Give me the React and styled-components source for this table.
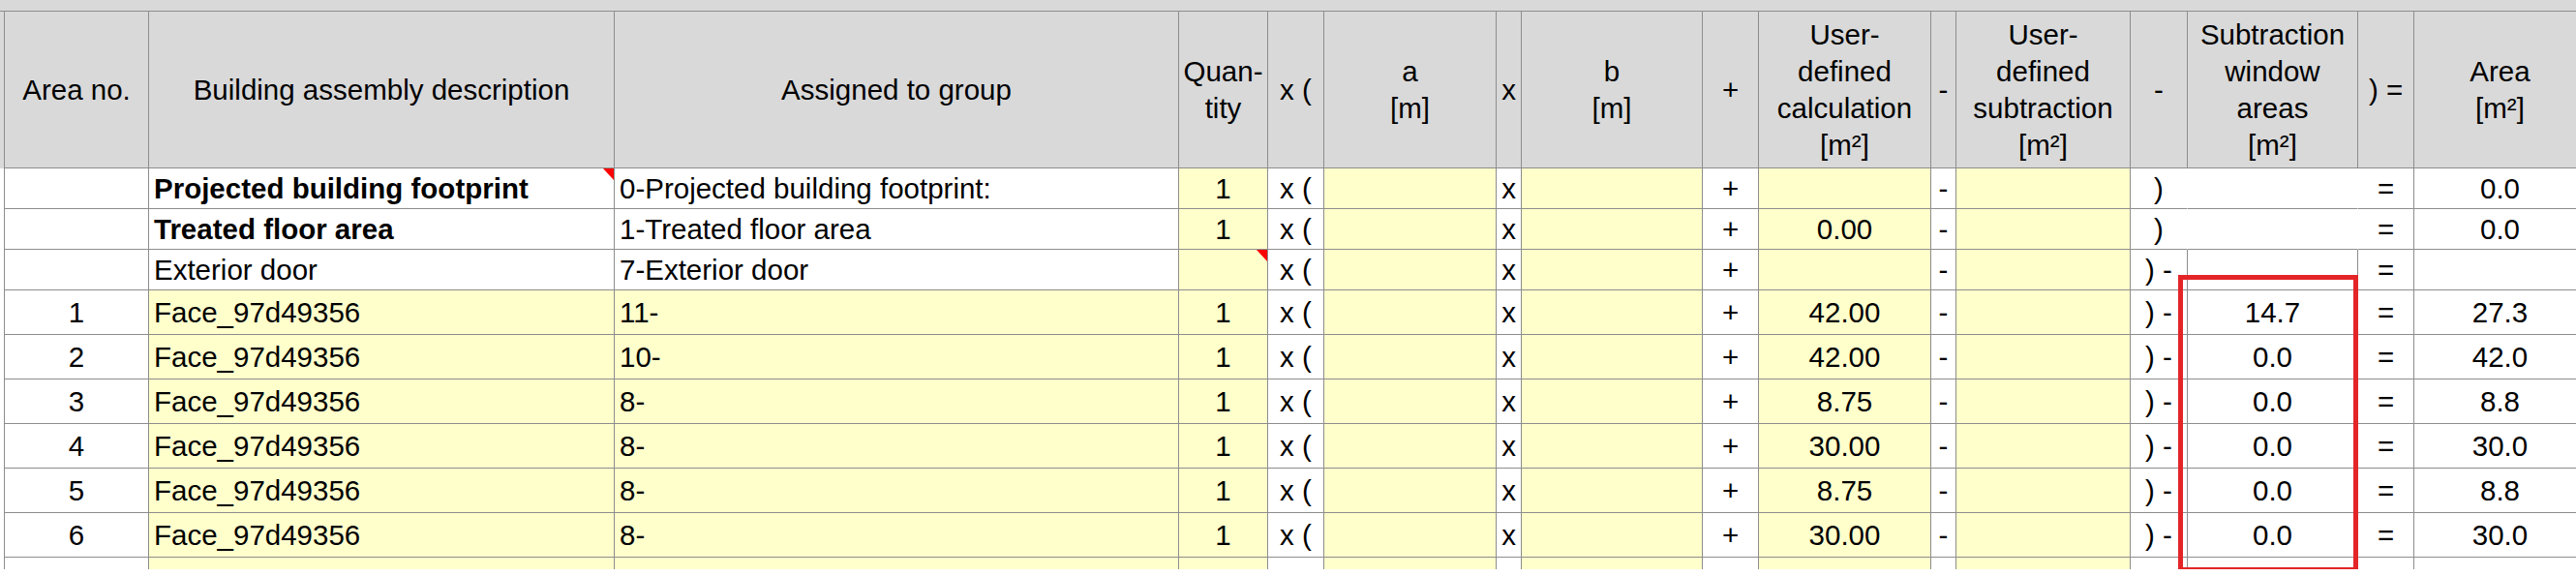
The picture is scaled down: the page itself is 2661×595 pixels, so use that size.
import styled, { createGlobalStyle } from "styled-components";

const GlobalStyle = createGlobalStyle`
  html, body {
    margin: 0;
    padding: 0;
    background: #ffffff;
    overflow: hidden;
  }
  body {
    font-family: "Liberation Sans", Arial, sans-serif;
    color: #000;
  }
`;

const LINE = "#8d8d8d";
const YELLOW = "#ffffcc";
const GREY = "#d9d9d9";
const COLS = [150, 481, 583, 92, 58, 178, 26, 187, 58, 178, 26, 180, 59, 176, 58, 178];

const Sheet = styled.div`
  position: relative;
  width: 2661px;
  height: 588px;
  overflow: hidden;
`;

const TopBand = styled.div`
  height: 11px;
  background: ${GREY};
  border-bottom: 1px solid ${LINE};
`;

const Row = styled.div`
  display: grid;
  grid-template-columns: ${COLS.map((w) => w + "px").join(" ")};
  height: ${(p) => p.$height}px;
  padding-left: 4px;
  background: ${(p) => (p.$header ? GREY : "#fff")};
`;

const Cell = styled.div`
  position: relative;
  box-sizing: border-box;
  display: flex;
  align-items: center;
  justify-content: ${(p) => (p.$left ? "flex-start" : "center")};
  padding: ${(p) => (p.$left ? "0 0 0 5px" : "0")};
  background: ${(p) => (p.$fill ? YELLOW : "#fff")};
  border-right: 1px solid ${(p) => (p.$open ? "transparent" : LINE)};
  border-bottom: 1px solid ${LINE};
  border-left: ${(p) => (p.$first ? `1px solid ${LINE}` : "none")};
  font-size: 29.5px;
  font-weight: ${(p) => (p.$bold ? 700 : 400)};
  white-space: nowrap;
  overflow: hidden;
`;

const HeadCell = styled.div`
  box-sizing: border-box;
  display: flex;
  align-items: center;
  justify-content: center;
  text-align: center;
  white-space: pre-line;
  font-size: 29.5px;
  line-height: 38px;
  border-right: 1px solid ${LINE};
  border-bottom: 1px solid ${LINE};
  border-left: ${(p) => (p.$first ? `1px solid ${LINE}` : "none")};
`;

const Note = styled.span`
  position: absolute;
  top: 0;
  right: 0;
  width: 0;
  height: 0;
  border-top: 12px solid #ff0000;
  border-left: 11px solid transparent;
`;

const Highlight = styled.div`
  position: absolute;
  left: 2250px;
  top: 284px;
  width: 186px;
  height: 307px;
  box-sizing: border-box;
  border: 5px solid #e42528;
  pointer-events: none;
`;

const headers = [
  "Area no.",
  "Building assembly description",
  "Assigned to group",
  "Quan-\ntity",
  "x (",
  "a\n[m]",
  "x",
  "b\n[m]",
  "+",
  "User-\ndefined\ncalculation\n[m²]",
  "-",
  "User-\ndefined\nsubtraction\n[m²]",
  "-",
  "Subtraction\nwindow\nareas\n[m²]",
  ") =",
  "Area\n[m²]",
];

const rows = [
  { h: 42, desc: "Projected building footprint", bold: true, descNote: true, group: "0-Projected building footprint:", qty: "1", closed: true, area: "0.0" },
  { h: 42, desc: "Treated floor area", bold: true, group: "1-Treated floor area", qty: "1", calc: "0.00", closed: true, area: "0.0" },
  { h: 42, desc: "Exterior door", group: "7-Exterior door", qtyNote: true },
  { h: 46, no: "1", desc: "Face_97d49356", face: true, group: "11-", qty: "1", calc: "42.00", swa: "14.7", area: "27.3" },
  { h: 46, no: "2", desc: "Face_97d49356", face: true, group: "10-", qty: "1", calc: "42.00", swa: "0.0", area: "42.0" },
  { h: 46, no: "3", desc: "Face_97d49356", face: true, group: "8-", qty: "1", calc: "8.75", swa: "0.0", area: "8.8" },
  { h: 46, no: "4", desc: "Face_97d49356", face: true, group: "8-", qty: "1", calc: "30.00", swa: "0.0", area: "30.0" },
  { h: 46, no: "5", desc: "Face_97d49356", face: true, group: "8-", qty: "1", calc: "8.75", swa: "0.0", area: "8.8" },
  { h: 46, no: "6", desc: "Face_97d49356", face: true, group: "8-", qty: "1", calc: "30.00", swa: "0.0", area: "30.0" },
  { h: 46, face: true },
];

const BodyRow = ({ r }) => (
  <Row $height={r.h}>
    <Cell $first>{r.no}</Cell>
    <Cell $left $fill={r.face} $bold={r.bold}>
      {r.desc}
      {r.descNote && <Note />}
    </Cell>
    <Cell $left $fill={r.face}>{r.group}</Cell>
    <Cell $fill>
      {r.qty}
      {r.qtyNote && <Note />}
    </Cell>
    <Cell>{r.desc ? "x (" : ""}</Cell>
    <Cell $fill />
    <Cell>{r.desc ? "x" : ""}</Cell>
    <Cell $fill />
    <Cell>{r.desc ? "+" : ""}</Cell>
    <Cell $fill>{r.calc}</Cell>
    <Cell>{r.desc ? "-" : ""}</Cell>
    <Cell $fill />
    <Cell $open={r.closed}>{r.desc ? (r.closed ? ")" : ") -") : ""}</Cell>
    <Cell $open={r.closed}>{r.swa}</Cell>
    <Cell>{r.desc ? "=" : ""}</Cell>
    <Cell>{r.area}</Cell>
  </Row>
);

export default function App() {
  return (
    <>
      <GlobalStyle />
      <Sheet>
        <TopBand />
        <Row $header $height={162}>
          {headers.map((h, i) => (
            <HeadCell key={i} $first={i === 0}>
              {h}
            </HeadCell>
          ))}
        </Row>
        {rows.map((r, i) => (
          <BodyRow key={i} r={r} />
        ))}
        <Highlight />
      </Sheet>
    </>
  );
}
